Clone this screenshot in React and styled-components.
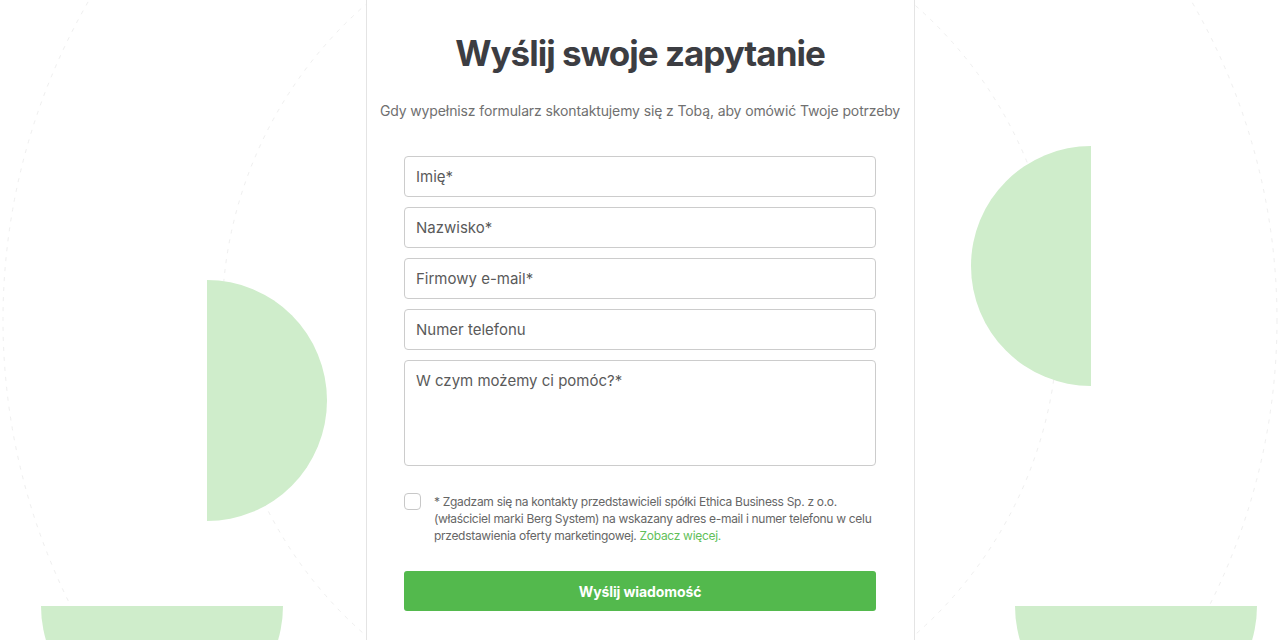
import React from "react";
import styled, { createGlobalStyle } from "styled-components";

const Global = createGlobalStyle`
  html, body { margin: 0; padding: 0; background: #ffffff; }
  body { font-family: Inter, "Noto Sans", Arial, sans-serif; }
  * { box-sizing: border-box; }
`;

const Page = styled.div`
  position: relative;
  width: 1280px;
  height: 640px;
  overflow: hidden;
  background: #ffffff;
  display: flex;
  justify-content: center;
`;

const Decor = styled.svg`
  position: absolute;
  left: 0;
  top: 0;
  width: 1280px;
  height: 640px;
  pointer-events: none;
`;

const Card = styled.div`
  position: relative;
  z-index: 1;
  width: 549px;
  height: 640px;
  background: #ffffff;
  border-left: 1px solid #e4e4e4;
  border-right: 1px solid #e4e4e4;
  padding: 31px 37px 0;
  display: flex;
  flex-direction: column;
  align-items: center;
`;

const Title = styled.h1`
  margin: 0;
  font-family: Inter, "Noto Sans", sans-serif;
  font-weight: 700;
  font-size: 35px;
  line-height: 44px;
  letter-spacing: -1px;
  color: #3c3d42;
`;

const Subtitle = styled.p`
  margin: 26px 0 0;
  font-size: 14px;
  line-height: 20px;
  color: #707070;
  white-space: nowrap;
  letter-spacing: -0.12px;
`;

const Form = styled.form`
  margin-top: 35px;
  width: 472px;
  display: flex;
  flex-direction: column;
  gap: 10px;
`;

const Input = styled.input`
  width: 100%;
  height: 41px;
  border: 1px solid #cccccc;
  border-radius: 4px;
  padding: 0 11px;
  font-family: Inter, "Noto Sans", sans-serif;
  font-size: 15px;
  color: #333;
  background: #fff;
  outline: none;
  &::placeholder { color: #5a5a5a; }
`;

const TextArea = styled.textarea`
  width: 100%;
  height: 106px;
  border: 1px solid #cccccc;
  border-radius: 4px;
  padding: 10px 11px;
  font-family: Inter, "Noto Sans", sans-serif;
  font-size: 15px;
  line-height: 20px;
  resize: none;
  outline: none;
  &::placeholder { color: #5a5a5a; }
`;

const Consent = styled.label`
  margin-top: 17px;
  display: flex;
  align-items: flex-start;
  gap: 13px;
`;

const Box = styled.span`
  flex: 0 0 auto;
  width: 17px;
  height: 17px;
  margin-top: 0;
  border: 1px solid #c8c8c8;
  border-radius: 4px;
  background: #fff;
`;

const ConsentText = styled.span`
  font-size: 12px;
  line-height: 17px;
  color: #666666;
  letter-spacing: -0.3px;
`;

const Link = styled.a`
  color: #62bf5a;
  text-decoration: none;
`;

const Button = styled.button`
  margin-top: 17px;
  width: 100%;
  height: 40px;
  border: none;
  border-radius: 3px;
  background: #53b94d;
  color: #ffffff;
  font-family: Inter, "Noto Sans", sans-serif;
  font-weight: 700;
  font-size: 14px;
  letter-spacing: -0.1px;
  cursor: pointer;
`;

export default function App() {
  return (
    <>
      <Global />
      <Page>
        <Decor viewBox="0 0 1280 640">
          <circle cx="640" cy="320" r="418" fill="none" stroke="#efefef" strokeWidth="1" strokeDasharray="4 6" />
          <circle cx="640" cy="320" r="637" fill="none" stroke="#efefef" strokeWidth="1" strokeDasharray="4 6" />
          <path d="M207 280 A120 120.5 0 0 1 207 521 Z" fill="#cfedcb" />
          <path d="M1091 146 A120 120 0 0 0 1091 386 Z" fill="#cfedcb" />
          <path d="M41 606 A121 121 0 0 0 283 606 Z" fill="#cfedcb" />
          <path d="M1015 606 A121 121 0 0 0 1257 606 Z" fill="#cfedcb" />
        </Decor>
        <Card>
          <Title>Wyślij swoje zapytanie</Title>
          <Subtitle>Gdy wypełnisz formularz skontaktujemy się z Tobą, aby omówić Twoje potrzeby</Subtitle>
          <Form onSubmit={(e) => e.preventDefault()}>
            <Input placeholder="Imię*" />
            <Input placeholder="Nazwisko*" />
            <Input placeholder="Firmowy e-mail*" />
            <Input placeholder="Numer telefonu" />
            <TextArea placeholder="W czym możemy ci pomóc?*" />
            <Consent>
              <Box />
              <ConsentText>
                * Zgadzam się na kontakty przedstawicieli spółki Ethica Business Sp. z o.o. (właściciel marki Berg System) na wskazany adres e-mail i numer telefonu w celu przedstawienia oferty marketingowej. <Link href="#">Zobacz więcej.</Link>
              </ConsentText>
            </Consent>
            <Button type="submit">Wyślij wiadomość</Button>
          </Form>
        </Card>
      </Page>
    </>
  );
}
